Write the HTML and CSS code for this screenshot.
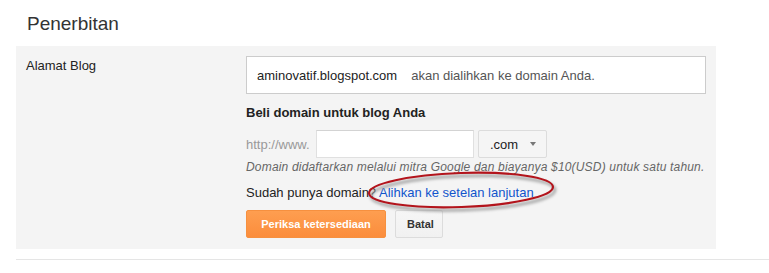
FILE: index.html
```html
<!DOCTYPE html>
<html>

<head>
  <meta charset="UTF-8" />
  <title>Penerbitan</title>
  <link rel="stylesheet" href="styles.css">
</head>

<body>
  <h1 class="page-title">Penerbitan</h1>

  <div class="panel">
    <div class="panel-label">Alamat Blog</div>
    <div class="panel-content">
      <div class="address-box">
        <span class="address">aminovatif.blogspot.com</span>
        <span class="address-note">akan dialihkan ke domain Anda.</span>
      </div>

      <h3 class="buy-title">Beli domain untuk blog Anda</h3>

      <div class="domain-row">
        <span class="prefix">http://www.</span>
        <input type="text" class="domain-input">
        <div class="tld-select">.com <span class="arrow"></span></div>
      </div>

      <p class="hint">Domain didaftarkan melalui mitra Google dan biayanya $10(USD) untuk satu tahun.</p>

      <div class="have-domain">
        Sudah punya domain? <a href="#">Alihkan ke setelan lanjutan</a>
        <!-- hand-drawn highlight over the link -->
        <svg class="highlight" width="200" height="46" viewBox="0 0 200 46">
          <defs>
            <filter id="soft" x="-10%" y="-30%" width="120%" height="160%">
              <feGaussianBlur stdDeviation="1.5" />
            </filter>
          </defs>
          <ellipse cx="97" cy="24" rx="92" ry="17" transform="rotate(-2 97 24)" fill="none" stroke="#9a9a9a" stroke-width="2.5" filter="url(#soft)" />
          <ellipse cx="95" cy="21" rx="92" ry="17" transform="rotate(-2 95 21)" fill="none" stroke="#b3141c" stroke-width="2.2" />
        </svg>
      </div>

      <div class="actions">
        <button class="btn btn-orange">Periksa ketersediaan</button>
        <button class="btn btn-plain">Batal</button>
      </div>
    </div>
  </div>

  <hr class="separator">
</body>

</html>
```

FILE: styles.css
```css
* {
  margin: 0;
  padding: 0;
  box-sizing: border-box;
  font-family: "Liberation Sans", Arial, sans-serif;
}

body {
  background-color: #fff;
  color: #222;
  font-size: 13px;
}

.page-title {
  height: 46px;
  padding: 10px 0 0 27px;
  font-weight: 400;
  font-size: 19px;
  line-height: 28px;
  color: #333;
}

.panel {
  display: flex;
  width: 700px;
  margin-left: 16px;
  padding: 10px 10px 11px 10px;
  background-color: #f4f4f4;
}

.panel-label {
  width: 220px;
  padding-top: 2px;
  line-height: 16px;
  color: #222;
}

.panel-content {
  flex: 1;
}

.address-box {
  display: flex;
  align-items: center;
  gap: 14px;
  height: 38px;
  padding: 0 10px;
  background: #fff;
  border: 1px solid #ccc;
}

.address {
  color: #222;
}

.address-note {
  color: #555;
}

.buy-title {
  margin-top: 11px;
  font-size: 13px;
  line-height: 16px;
  font-weight: bold;
  color: #222;
}

.domain-row {
  display: flex;
  align-items: center;
  margin-top: 9px;
  height: 28px;
}

.prefix {
  width: 70px;
  color: #999;
}

.domain-input {
  width: 158px;
  height: 28px;
  border: 1px solid #e0e0e0;
  border-top-color: #d3d3d3;
  background: #fff;
}

.tld-select {
  display: flex;
  align-items: center;
  gap: 12px;
  height: 28px;
  margin-left: 4px;
  padding: 0 10px 0 11px;
  border: 1px solid #dcdcdc;
  border-radius: 2px;
  background: #f5f5f5;
  color: #222;
}

.arrow {
  width: 0;
  height: 0;
  border-left: 3px solid transparent;
  border-right: 3px solid transparent;
  border-top: 4px solid #777;
}

.hint {
  margin-top: 2px;
  font-size: 12px;
  line-height: 14px;
  letter-spacing: 0.18px;
  font-style: italic;
  color: #666;
}

.have-domain {
  position: relative;
  margin-top: 11px;
  line-height: 16px;
  color: #222;
}

.have-domain a {
  color: #15c;
  text-decoration: none;
}

.highlight {
  position: absolute;
  left: 120px;
  top: -16px;
  pointer-events: none;
}

.actions {
  display: flex;
  gap: 9px;
  margin-top: 9px;
}

.btn {
  height: 28px;
  padding: 0 11px;
  border-radius: 2px;
  font-size: 11px;
  font-weight: bold;
  cursor: pointer;
}

.btn-orange {
  width: 140px;
  color: #fff;
  border: 1px solid #f6903f;
  background: linear-gradient(#fe9e50, #fb8d3c);
}

.btn-plain {
  width: 48px;
  color: #333;
  border: 1px solid #dcdcdc;
  background: linear-gradient(#f6f6f6, #f1f1f1);
}

.separator {
  margin: 10px 0 0 16px;
  border: none;
  border-top: 1px solid #e5e5e5;
}
```
